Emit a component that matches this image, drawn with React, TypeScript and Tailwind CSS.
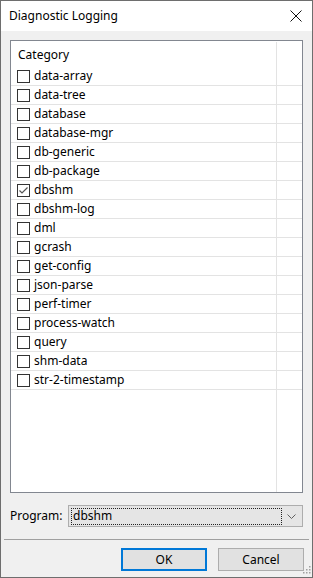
const categories = [
  'data-array',
  'data-tree',
  'database',
  'database-mgr',
  'db-generic',
  'db-package',
  'dbshm',
  'dbshm-log',
  'dml',
  'gcrash',
  'get-config',
  'json-parse',
  'perf-timer',
  'process-watch',
  'query',
  'shm-data',
  'str-2-timestamp',
];

const checked = ['dbshm'];

function Checkbox({ on }: { on: boolean }) {
  return (
    <div className="w-[13px] h-[13px] border border-[#333333] bg-white shrink-0 flex items-center justify-center">
      {on && (
        <svg width="11" height="11" viewBox="0 0 11 11">
          <polyline points="1.5,5.5 4,8 9.5,2.5" fill="none" stroke="#555555" strokeWidth="1.2" />
        </svg>
      )}
    </div>
  );
}

function Row({ name }: { name: string }) {
  return (
    <div className="flex h-[19px] border-b border-[#e3e3e3]">
      <div className="flex-1 flex items-center pl-[6px] gap-[4px]">
        <Checkbox on={checked.includes(name)} />
        <span className="leading-none pb-[1px]">{name}</span>
      </div>
      <div className="w-[26px] border-l border-[#e3e3e3]" />
    </div>
  );
}

export default function App() {
  return (
    <div
      className="w-[313px] h-[578px] border border-[#6e6e6e] bg-[#f0f0f0] flex flex-col text-[12px] text-black"
      style={{ fontFamily: '"Noto Sans", "Open Sans", sans-serif' }}
    >
      <div className="h-[30px] bg-white flex items-center justify-between pl-[8px] pr-[10px] shrink-0">
        <span>Diagnostic Logging</span>
        <svg width="12" height="12" viewBox="0 0 12 12">
          <path d="M0.5 0.5 L11.5 11.5 M11.5 0.5 L0.5 11.5" stroke="#111111" strokeWidth="1" />
        </svg>
      </div>

      <div className="mt-[9px] ml-[9px] w-[293px] h-[453px] border border-[#828790] bg-white flex flex-col">
        <div className="flex h-[26px]">
          <div className="flex-1 flex items-center pl-[7px] pt-[1px]">Category</div>
          <div className="w-[26px] border-l border-[#e3e3e3] mt-[1px]" />
        </div>
        {categories.map((c) => (
          <Row key={c} name={c} />
        ))}
        <div className="flex flex-1">
          <div className="flex-1" />
          <div className="w-[26px] border-l border-[#e3e3e3]" />
        </div>
      </div>

      <div className="flex items-center mt-[12px] h-[22px] pl-[9px]">
        <span className="w-[58px]">Program:</span>
        <div className="w-[235px] h-[22px] border border-[#adadad] bg-[#e5e5e5] flex items-center pl-[2px] pr-[6px]">
          <div className="flex-1 h-[17px] border border-dotted border-[#222222] flex items-center pl-[1px]">
            dbshm
          </div>
          <svg width="9" height="5" viewBox="0 0 9 5" className="ml-[5px]">
            <polyline points="0.5,0.5 4.5,4.5 8.5,0.5" fill="none" stroke="#606060" strokeWidth="1" />
          </svg>
        </div>
      </div>

      <div className="mt-[12px] mx-[3px] h-[1px] bg-[#a0a0a0]" />

      <div className="flex justify-end gap-[11px] mt-[8px] pr-[8px] relative">
        <button className="w-[86px] h-[23px] border-2 border-[#0078d7] bg-[#e1e1e1] flex items-center justify-center">
          OK
        </button>
        <button className="w-[86px] h-[23px] border border-[#adadad] bg-[#e1e1e1] flex items-center justify-center">
          Cancel
        </button>
        <svg width="8" height="8" viewBox="0 0 8 8" className="absolute right-[1px] top-[18px]">
          <rect x="6" y="0" width="1.5" height="1.5" fill="#a0a0a0" />
          <rect x="3" y="3" width="1.5" height="1.5" fill="#a0a0a0" />
          <rect x="6" y="3" width="1.5" height="1.5" fill="#a0a0a0" />
          <rect x="0" y="6" width="1.5" height="1.5" fill="#a0a0a0" />
          <rect x="3" y="6" width="1.5" height="1.5" fill="#a0a0a0" />
          <rect x="6" y="6" width="1.5" height="1.5" fill="#a0a0a0" />
        </svg>
      </div>
    </div>
  );
}
